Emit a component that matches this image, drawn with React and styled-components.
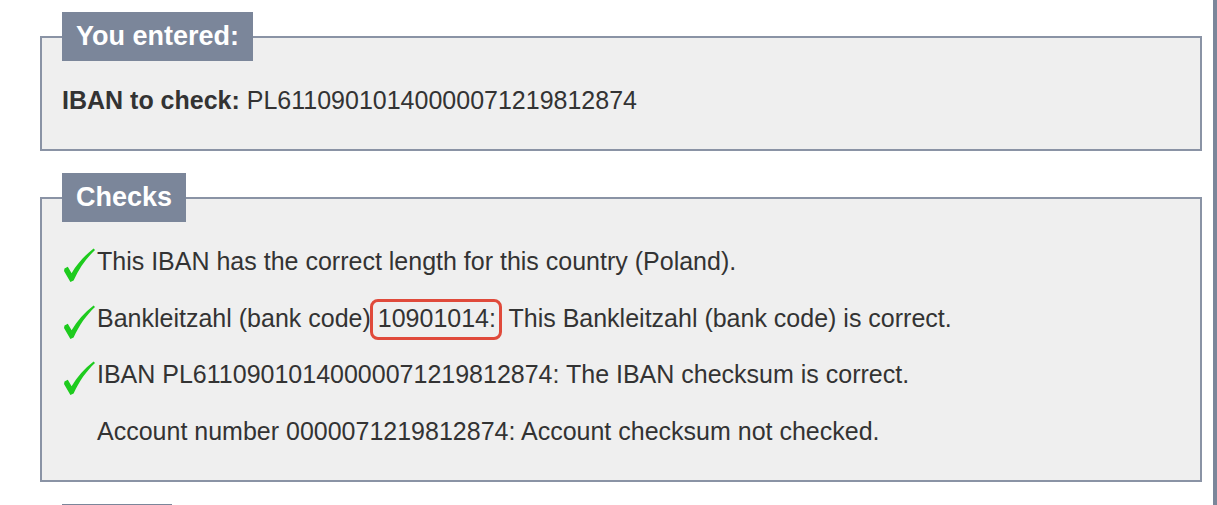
import styled, { createGlobalStyle } from "styled-components";

const GlobalStyle = createGlobalStyle`
    html, body {
        margin: 0;
        padding: 0;
        background: #fff;
        font-family: "Liberation Sans", Arial, Helvetica, sans-serif;
    }
`;

const Page = styled.div`
    display: flex;
    height: 100vh;
    overflow: hidden;
`;

const Main = styled.main`
    flex: 1;
    display: flex;
    flex-direction: column;
    gap: 22px;
    padding: 12px 11px 0 40px;
`;

const RightRail = styled.div`
    width: 4px;
    flex-shrink: 0;
    background-color: #7b869a;
`;

const Panel = styled.fieldset`
    margin: 0;
    min-width: 0;
    border: 2px solid #8a93a5;
    background-color: #efefef;
    padding: 22px 20px 31px 20px;
    color: #333;
    font-size: 25px;
`;

const Legend = styled.legend`
    margin: 0;
    padding: 9px 14px;
    box-sizing: border-box;
    min-width: ${(p) => (p.$width ? `${p.$width}px` : "0")};
    min-height: 49px;
    background-color: #7b869a;
    color: #fff;
    font-size: 27px;
    font-weight: 700;
    line-height: 31px;
`;

const Rows = styled.div`
    display: flex;
    flex-direction: column;
    gap: 21.5px;
`;

const Row = styled.div`
    display: flex;
    align-items: flex-start;
    height: 35px;
    line-height: 35px;
    white-space: nowrap;
`;

const IconSlot = styled.span`
    width: 35px;
    height: 35px;
    flex-shrink: 0;
    padding: 4px 0 0 2px;
    box-sizing: border-box;
    line-height: 0;
    overflow: visible;
`;

const Label = styled.strong`
    font-weight: 700;
`;

const Marked = styled.span`
    display: inline-block;
    line-height: 33px;
    padding: 0 3px 2px 5px;
    margin: -3px 0 -5px -1px;
    border: 3px solid #e04a3b;
    border-radius: 8px;
`;

function CheckMark() {
    return (
        <svg width="31" height="34" viewBox="0 0 31 34">
            <path
                d="M0.5 20.5 L3.8 18.8 L7.6 25.2 C13 16 20.5 7.5 29.6 0.4 L31 2 C22.5 10 15.2 20 9.6 32.6 L6.4 34 L0 23 Z"
                fill="#1ecb1e"
            />
        </svg>
    );
}

const checks = [
    { ok: true, text: "This IBAN has the correct length for this country (Poland)." },
    {
        ok: true,
        text: (
            <>
                Bankleitzahl (bank code)<Marked>10901014:</Marked> This Bankleitzahl (bank code) is correct.
            </>
        ),
    },
    { ok: true, text: "IBAN PL61109010140000071219812874: The IBAN checksum is correct." },
    { ok: false, text: "Account number 0000071219812874: Account checksum not checked." },
];

function App() {
    return (
        <>
            <GlobalStyle />
            <Page>
                <Main>
                    <Panel>
                        <Legend>You entered:</Legend>
                        <Row>
                            <span>
                                <Label>IBAN to check:</Label> PL61109010140000071219812874
                            </span>
                        </Row>
                    </Panel>
                    <Panel>
                        <Legend>Checks</Legend>
                        <Rows>
                            {checks.map((item, i) => (
                                <Row key={i}>
                                    <IconSlot>{item.ok && <CheckMark />}</IconSlot>
                                    <span>{item.text}</span>
                                </Row>
                            ))}
                        </Rows>
                    </Panel>
                    {/* next panel starts just below the fold */}
                    <Panel>
                        <Legend $width={110} />
                    </Panel>
                </Main>
                <RightRail />
            </Page>
        </>
    );
}

export default App;
